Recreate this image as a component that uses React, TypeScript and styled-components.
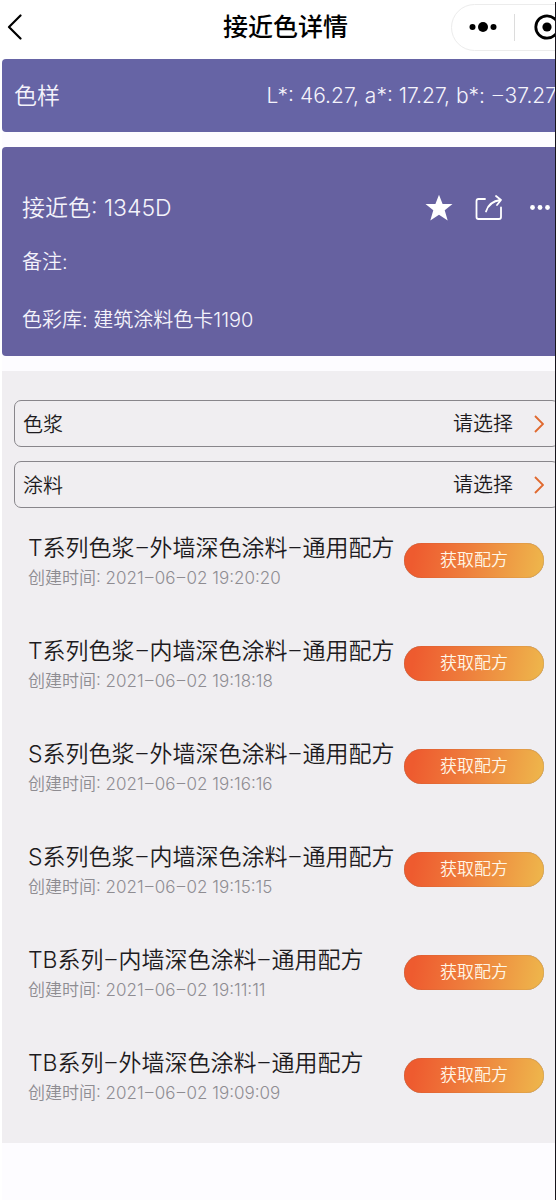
import React, { Fragment } from "react";
import styled, { createGlobalStyle } from "styled-components";

const GlobalStyle = createGlobalStyle`
  *, *::before, *::after { box-sizing: border-box; }
  body {
    margin: 0;
    background: #fff;
    font-family: Inter, "Noto Sans CJK SC", sans-serif;
    font-weight: 350;
    color: #1d1b20;
  }
  button, select {
    font: inherit;
    color: inherit;
    border: 0;
    padding: 0;
    background: none;
    cursor: pointer;
  }
  h1, h2, p, ul { margin: 0; padding: 0; font-weight: inherit; }
  ul { list-style: none; }
  svg { display: block; }
`;

const Screen = styled.div`
  display: flex;
  min-height: 100vh;
  padding: 2px;
`;

const Page = styled.div`
  flex: 1;
  min-width: 0;
  overflow: hidden;
  border-right: 1px solid #17151c;
  background: #fdfcff;
`;

const Header = styled.header`
  display: grid;
  grid-template-columns: 1fr auto 1fr;
  align-items: center;
  height: 57px;
  padding-bottom: 7px;
  background: #fff;
`;

const BackButton = styled.button`
  justify-self: start;
  padding-left: 5px;
`;

const PageTitle = styled.h1`
  padding-left: 14px;
  font-size: 25px;
  line-height: 36px;
  font-weight: 500;
  color: #000;
`;

const Capsule = styled.div`
  display: flex;
  align-items: center;
  justify-self: end;
  flex-shrink: 0;
  width: 128px;
  height: 47px;
  margin-right: -24px;
  border: 1px solid #ececec;
  border-radius: 24px;
`;

const CapsuleButton = styled.button<{ $divided?: boolean }>`
  display: flex;
  align-items: center;
  justify-content: center;
  width: 63px;
  height: 27px;
  ${(p) => p.$divided && "border-right: 1px solid #dcdcdc;"}
`;

const Swatch = styled.section`
  display: flex;
  align-items: center;
  justify-content: space-between;
  height: 73px;
  margin-bottom: 15px;
  padding-left: 12px;
  border-radius: 4px 0 0 4px;
  background: #6664a5;
  color: #f4f3fb;
  white-space: nowrap;
`;

const SwatchName = styled.h2`
  font-size: 23px;
  line-height: 32px;
`;

const LabValues = styled.p`
  margin-right: -2px;
  font-size: 21px;
  line-height: 32px;
`;

const ColorCard = styled.section`
  margin-bottom: 15px;
  padding: 45px 0 20px 20px;
  border-radius: 4px 0 0 4px;
  background: #6661a0;
  color: #f4f3fb;
`;

const CardTop = styled.div`
  display: flex;
  align-items: center;
  justify-content: space-between;
  margin-bottom: 22px;
`;

const CardTitle = styled.h2`
  font-size: 23px;
  line-height: 32px;
`;

const Actions = styled.div`
  display: flex;
  align-items: center;
  gap: 22px;
`;

const CardLine = styled.p`
  font-size: 20px;
  line-height: 32px;

  & + & { margin-top: 26px; }
`;

const FormulaPanel = styled.main`
  padding: 29px 0 0 12px;
  background: #f0eef1;
`;

const Field = styled.label`
  display: flex;
  align-items: center;
  height: 47px;
  margin: 0 -4px 14px 0;
  padding: 0 14px 0 8px;
  border: 1px solid #88868b;
  border-radius: 7px;
  font-size: 20px;
`;

const Picker = styled.select`
  flex: 1;
  height: 40px;
  margin: 0 21px;
  appearance: none;
  text-align: right;
  text-align-last: right;
`;

const FormulaList = styled.ul`
  padding: 9px 11px 0 14px;
`;

const FormulaRow = styled.li`
  display: flex;
  align-items: flex-start;
  justify-content: space-between;
  height: 103px;

  &:last-child { height: 97px; }
`;

const FormulaName = styled.h2`
  font-size: 23px;
  line-height: 34px;
  white-space: nowrap;
`;

const Created = styled.p`
  font-size: 17px;
  line-height: 24px;
  color: #8e8c91;
`;

const WideDash = styled.span`
  font-family: Roboto, sans-serif;
`;

const FetchButton = styled.button`
  flex-shrink: 0;
  width: 140px;
  height: 35px;
  margin-top: 12px;
  border-radius: 18px;
  background: linear-gradient(100deg, #ee5b2f 8%, #ee7d3c 45%, #eeb84c 100%);
  box-shadow: inset 0 0 1px #8a5a3c;
  color: #fff6e6;
  font-size: 17px;
  line-height: 35px;
`;

const Chevron = () => (
  <svg width="10" height="18" viewBox="0 0 10 18" fill="none" stroke="#e0692f" strokeWidth="1.9" aria-hidden="true">
    <path d="M1 1l8 8-8 8" />
  </svg>
);

/* Sets every dash of a text in the wider cut. */
const Dashed = ({ text }: { text: string }) => (
  <>
    {text.split("–").map((part, i) => (
      <Fragment key={i}>
        {i > 0 && <WideDash>–</WideDash>}
        {part}
      </Fragment>
    ))}
  </>
);

const fields = ["色浆", "涂料"];

const formulas = [
  { name: "T系列色浆–外墙深色涂料–通用配方", time: "19:20:20" },
  { name: "T系列色浆–内墙深色涂料–通用配方", time: "19:18:18" },
  { name: "S系列色浆–外墙深色涂料–通用配方", time: "19:16:16" },
  { name: "S系列色浆–内墙深色涂料–通用配方", time: "19:15:15" },
  { name: "TB系列–内墙深色涂料–通用配方", time: "19:11:11" },
  { name: "TB系列–外墙深色涂料–通用配方", time: "19:09:09" },
];

export default function App() {
  return (
    <>
      <GlobalStyle />
      <Screen>
        <Page>
          <Header>
            <BackButton aria-label="返回">
              <svg width="16" height="26" viewBox="0 0 16 26" fill="none" stroke="#000" strokeWidth="2.2" strokeLinecap="round" strokeLinejoin="round">
                <path d="M13.500 1.500L2 13l11.500 11.500" />
              </svg>
            </BackButton>
            <PageTitle>接近色详情</PageTitle>
            <Capsule>
              <CapsuleButton $divided aria-label="更多">
                <svg width="28" height="12" viewBox="0 0 28 12" fill="#000">
                  <circle cx="3.5" cy="6" r="3" />
                  <circle cx="14" cy="6" r="5" />
                  <circle cx="24.5" cy="6" r="3" />
                </svg>
              </CapsuleButton>
              <CapsuleButton aria-label="关闭">
                <svg width="26" height="26" viewBox="0 0 26 26">
                  <circle cx="13" cy="13" r="11.2" fill="none" stroke="#000" strokeWidth="2.800" />
                  <circle cx="13" cy="13" r="4.6" />
                </svg>
              </CapsuleButton>
            </Capsule>
          </Header>

          <Swatch>
            <SwatchName>色样</SwatchName>
            <LabValues><Dashed text="L*: 46.27, a*: 17.27, b*: –37.27" /></LabValues>
          </Swatch>

          <ColorCard>
            <CardTop>
              <CardTitle>接近色: 1345D</CardTitle>
              <Actions>
                <button aria-label="收藏">
                  <svg width="28" height="28" viewBox="0 0 28 28" fill="#fff">
                    <path d="M14 .8l3.6 9.200H27.5l-7.8 6.2 3 10.3L14 20.8l-8.7 5.7 3-10.3L.5 10H10.400z" />
                  </svg>
                </button>
                <button aria-label="分享">
                  <svg width="28" height="28" viewBox="0 0 28 28" fill="none" stroke="#fff" strokeWidth="1.8" strokeLinecap="round" strokeLinejoin="round">
                    <path d="M10 5H3.500Q1.500 5 1.500 7v16q0 2 2 2h20.500q2 0 2-2V13.500" />
                    <path d="M11 17.500Q14 7.500 25.500 6M21 2l5 4-4 5" />
                  </svg>
                </button>
                <button aria-label="更多操作">
                  <svg width="30" height="28" viewBox="0 0 30 28" fill="#fff">
                    <circle cx="7.500" cy="13.500" r="2.400" />
                    <circle cx="15" cy="13.500" r="2.400" />
                    <circle cx="22.500" cy="13.500" r="2.400" />
                  </svg>
                </button>
              </Actions>
            </CardTop>
            <CardLine>备注:</CardLine>
            <CardLine>色彩库: 建筑涂料色卡1190</CardLine>
          </ColorCard>

          <FormulaPanel>
            {fields.map((name) => (
              <Field key={name}>
                {name}
                <Picker defaultValue="">
                  <option value="">请选择</option>
                </Picker>
                <Chevron />
              </Field>
            ))}
            <FormulaList>
              {formulas.map((f) => (
                <FormulaRow key={f.name}>
                  <div>
                    <FormulaName><Dashed text={f.name} /></FormulaName>
                    <Created><Dashed text={`创建时间: 2021–06–02 ${f.time}`} /></Created>
                  </div>
                  <FetchButton>获取配方</FetchButton>
                </FormulaRow>
              ))}
            </FormulaList>
          </FormulaPanel>
        </Page>
      </Screen>
    </>
  );
}
